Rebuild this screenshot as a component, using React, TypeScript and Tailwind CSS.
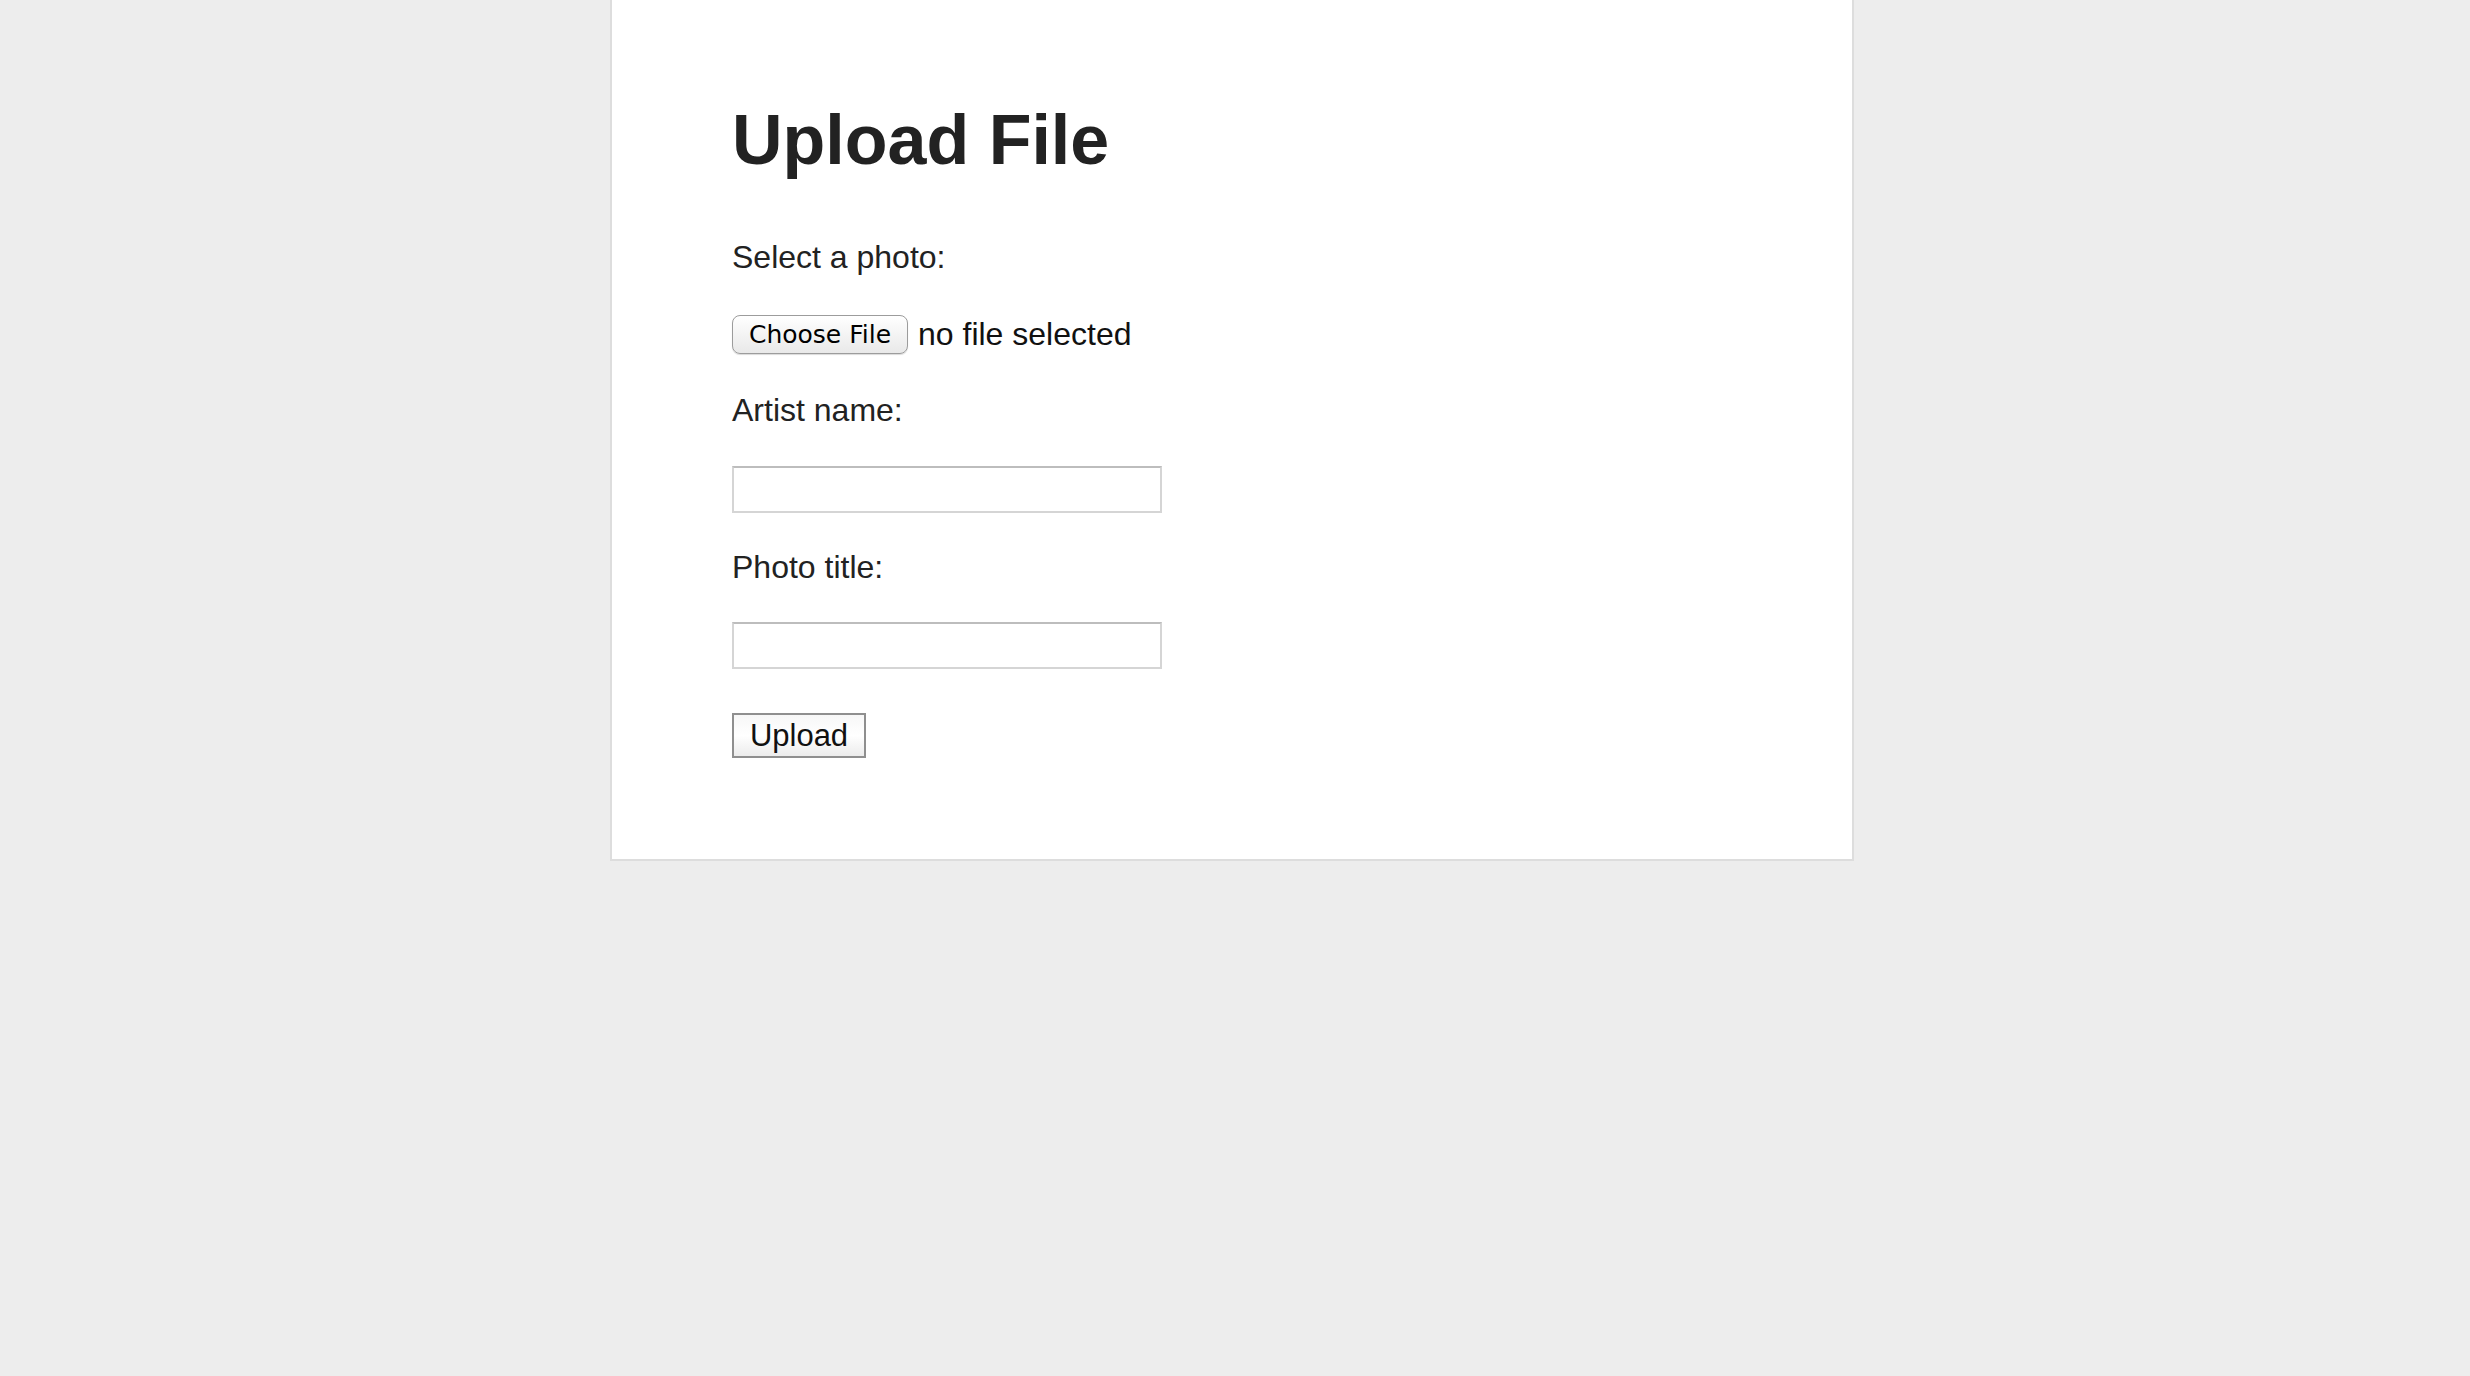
export default function App() {
  return (
    <div className="min-h-screen bg-[#ededed] font-['Liberation_Sans',Arial,sans-serif] text-[#222]">
      <div className="ml-[610px] w-[1244px] bg-white border-x-2 border-b-2 border-[#dddddd] pl-[120px] pt-[100px] pb-[101px]">
        <h1 className="text-[70px] leading-[80px] font-bold">Upload File</h1>

        <form onSubmit={(e) => e.preventDefault()}>
          <label className="block mt-[57px] text-[32px] leading-[40px]">Select a photo:</label>
          <div className="mt-[37px] h-[40px] flex items-center gap-[10px]">
            <button
              type="button"
              className="h-[39px] w-[176px] rounded-[8px] border border-[#9c9c9c] bg-gradient-to-b from-white to-[#e9e9e9] shadow-[0_1px_1px_rgba(0,0,0,0.15)] font-['DejaVu_Sans',sans-serif] text-[25px] leading-none text-black"
            >
              Choose File
            </button>
            <span className="text-[32px] leading-[40px] text-[#111]">no file selected</span>
          </div>

          <label className="block mt-[36px] text-[32px] leading-[40px]">Artist name:</label>
          <input
            type="text"
            className="block mt-[36px] w-[430px] h-[47px] border-2 border-[#d5d5d5] border-t-[#bdbdbd] bg-white outline-none"
          />

          <label className="block mt-[34px] text-[32px] leading-[40px]">Photo title:</label>
          <input
            type="text"
            className="block mt-[35px] w-[430px] h-[47px] border-2 border-[#d5d5d5] border-t-[#bdbdbd] bg-white outline-none"
          />

          <button
            type="submit"
            className="block mt-[44px] w-[134px] h-[45px] border-2 border-[#8f8f8f] bg-gradient-to-b from-[#f7f7f7] via-white to-[#ececec] text-[31px] leading-none text-[#111]"
          >
            Upload
          </button>
        </form>
      </div>
    </div>
  );
}
